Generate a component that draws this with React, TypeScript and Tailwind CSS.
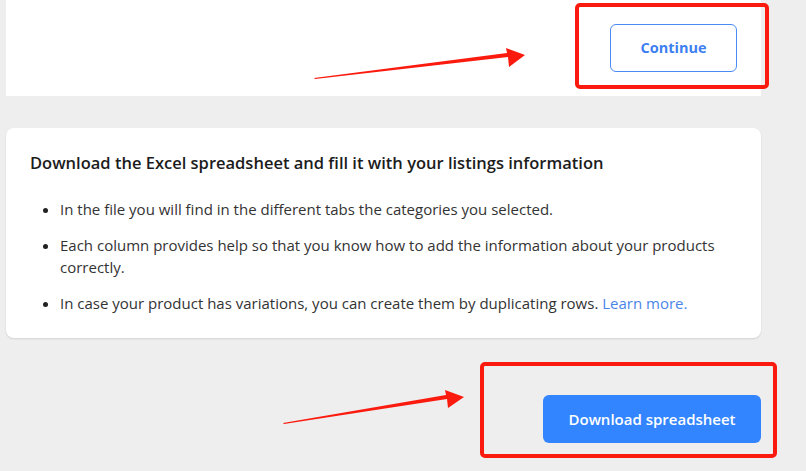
const bullets = [
  "In the file you will find in the different tabs the categories you selected.",
  "Each column provides help so that you know how to add the information about your products correctly.",
];

const Annotations = () => {
  return (
    <svg className="pointer-events-none absolute inset-0" width="806" height="471" viewBox="0 0 806 471">
      <rect x="577" y="5" width="190" height="82" rx="3" fill="none" stroke="#fb1a0e" strokeWidth="4" />
      <rect x="482" y="364" width="293" height="92" rx="3" fill="none" stroke="#fb1a0e" strokeWidth="4" />
      <polygon points="315,79 508,57 509,67 525,55 506,48 507,53 314,78" fill="#fb1a0e" />
      <polygon points="284,424 447,399 448,408 464,397 445,390 446,395 283,423" fill="#fb1a0e" />
    </svg>
  );
};

const App = () => {
  return (
    <div className="relative min-h-[471px] w-[806px] overflow-hidden bg-[#eeeeee] font-['Open_Sans',sans-serif]">
      <div className="ml-[6px] flex h-[96px] w-[755px] items-center justify-end bg-white pr-[24px]">
        <button className="h-[48px] w-[127px] rounded-[6px] border border-[#4a8af4] text-[14.5px] font-bold text-[#3d7ff0]">
          Continue
        </button>
      </div>

      <div className="ml-[6px] mt-[32px] h-[210px] w-[755px] rounded-[8px] bg-white px-[24px] pt-[24px] shadow-[0_1px_2px_rgba(0,0,0,0.12)]">
        <h2 className="text-[16.5px] font-semibold leading-[22px] text-[#1c1c1c]">
          Download the Excel spreadsheet and fill it with your listings information
        </h2>
        <ul className="mt-[24px] space-y-[14px] pl-[30px] text-[15px] leading-[22px] text-[#333333] list-disc marker:text-[#222]">
          {bullets.map((b, i) => (
            <li key={i}>{b}</li>
          ))}
          <li>
            In case your product has variations, you can create them by duplicating rows.{" "}
            <a className="text-[#4a86e8]">Learn more.</a>
          </li>
        </ul>
      </div>

      <div className="mr-[45px] mt-[57px] flex justify-end">
        <button className="h-[48px] w-[218px] rounded-[6px] bg-[#3385ff] text-[15px] font-semibold text-white">
          Download spreadsheet
        </button>
      </div>

      <Annotations />
    </div>
  );
};

export default App;
